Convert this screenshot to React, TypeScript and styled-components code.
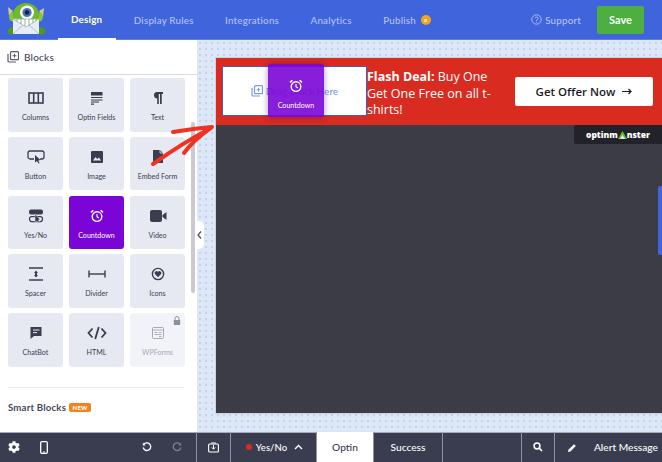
import React from 'react';
import styled, { createGlobalStyle } from 'styled-components';
import { FaCog } from 'react-icons/fa';

const Global = createGlobalStyle`
  html, body {
    margin: 0;
    padding: 0;
    background: #fff;
  }
  * {
    box-sizing: border-box;
  }
`;

const Page = styled.div`
  width: 662px;
  height: 462px;
  display: flex;
  flex-direction: column;
  overflow: hidden;
  position: relative;
  font-family: Lato, 'Liberation Sans', sans-serif;
  color: #3a3d50;
`;

const Header = styled.header`
  height: 40px;
  flex: none;
  display: flex;
  align-items: center;
  background: #4064dc;
  border-bottom: 1px solid #5f7ee4;
`;

const LogoBox = styled.div`
  width: 58px;
  flex: none;
  display: flex;
  padding-left: 7px;
`;

const Nav = styled.nav`
  display: flex;
  align-self: stretch;
  gap: 5px;
`;

const NavItem = styled.div<{ $active?: boolean }>`
  display: flex;
  align-items: center;
  gap: 5px;
  padding: 0 13.5px 0 13px;
  font-size: 9.8px;
  font-weight: ${(p) => (p.$active ? 700 : 500)};
  letter-spacing: 0.2px;
  color: ${(p) => (p.$active ? '#fff' : '#b4c3f3')};
  height: 40px;
  border-bottom: ${(p) => (p.$active ? '2px solid #fff' : '0')};
`;

const ProBadge = styled.span`
  width: 10px;
  height: 10px;
  border-radius: 50%;
  background: #f2a51e;
  display: flex;
  align-items: center;
  justify-content: center;
  &::after {
    content: '';
    width: 3px;
    height: 3px;
    background: #fbe3a8;
  }
`;

const HeaderRight = styled.div`
  margin-left: auto;
  display: flex;
  align-items: center;
`;

const Support = styled.div`
  display: flex;
  align-items: center;
  gap: 3px;
  font-size: 9.8px;
  font-weight: 500;
  letter-spacing: 0.2px;
  color: #b4c3f3;
  margin-right: 16px;
`;

const SaveButton = styled.button`
  width: 47px;
  height: 28px;
  border: 0;
  border-radius: 2px;
  background: #4caf3f;
  color: #fff;
  font: 700 11px Lato, sans-serif;
  padding: 0;
  margin-right: 18px;
`;

const Main = styled.div`
  flex: 1;
  min-height: 0;
  display: flex;
`;

const Sidebar = styled.aside`
  width: 197px;
  flex: none;
  background: #fff;
  display: flex;
  flex-direction: column;
  position: relative;
`;

const PanelTitle = styled.div`
  height: 35px;
  flex: none;
  display: flex;
  align-items: center;
  gap: 5px;
  padding-left: 7px;
  font-size: 10px;
  font-weight: 500;
  letter-spacing: 0.2px;
  color: #3f4254;
  border-bottom: 1px solid #d6dbea;
`;

const Grid = styled.div`
  display: grid;
  grid-template-columns: repeat(3, 55px);
  grid-auto-rows: 53.5px;
  column-gap: 6px;
  row-gap: 5.25px;
  padding: 3px 0 0 8px;
`;

const Tile = styled.div<{ $active?: boolean; $locked?: boolean }>`
  position: relative;
  border-radius: 3px;
  display: flex;
  flex-direction: column;
  align-items: center;
  padding-top: 10px;
  background: ${(p) => (p.$active ? '#7a05d6' : p.$locked ? '#f2f3f8' : '#e6e9f1')};
  color: ${(p) => (p.$active ? '#fff' : p.$locked ? '#a5a8b6' : '#3a3d50')};
`;

const TileIcon = styled.div`
  height: 20px;
  display: flex;
  align-items: center;
  justify-content: center;
`;

const TileLabel = styled.div`
  margin-top: 5px;
  font-size: 7.1px;
  line-height: 10px;
  white-space: nowrap;
`;

const Lock = styled.svg`
  position: absolute;
  top: 3px;
  right: 4px;
`;

const Scrollbar = styled.div`
  position: absolute;
  left: 191px;
  top: 82px;
  width: 4px;
  height: 171px;
  background: #c9cbd0;
  border-radius: 2px;
`;

const Divider = styled.div`
  height: 1px;
  margin: 20px 13px 0 8px;
  background: #e9ebf1;
`;

const SmartTitle = styled.div`
  display: flex;
  align-items: center;
  gap: 3px;
  margin: 14px 0 0 8px;
  font-size: 9.6px;
  font-weight: 700;
  letter-spacing: 0.2px;
  color: #45485a;
`;

const NewTag = styled.span`
  background: #f6821f;
  color: #fff;
  font-size: 6px;
  font-weight: 900;
  line-height: 9px;
  padding: 0 3.5px;
  border-radius: 2px;
`;

const Canvas = styled.main`
  flex: 1;
  min-width: 0;
  position: relative;
  padding: 18px 0 19px 19px;
  background-color: #dce8f7;
  background-image: radial-gradient(#c3d1e6 0.7px, transparent 0.8px);
  background-size: 6px 6px;
`;

const Campaign = styled.div`
  height: 100%;
  display: flex;
  flex-direction: column;
  background: #3c3c46;
  box-shadow: 0 0 0 1px #c9d2de;
`;

const Banner = styled.div`
  height: 67px;
  flex: none;
  display: flex;
  align-items: center;
  background: #d92b20;
  padding-left: 6px;
`;

const DropZone = styled.div`
  width: 145px;
  height: 50px;
  flex: none;
  margin-top: -2px;
  display: flex;
  align-items: center;
  justify-content: center;
  gap: 3px;
  background: #fff;
  border: 1px solid #3f5fc7;
  color: #7c98ea;
  font-size: 10px;
  font-weight: 500;
`;

const Headline = styled.div`
  width: 140px;
  flex: none;
  margin-top: 5px;
  font-family: 'Open Sans', sans-serif;
  font-size: 12.5px;
  line-height: 16.5px;
  color: #fff;
  b {
    font-weight: 700;
  }
`;

const OfferButton = styled.button`
  width: 138px;
  height: 29px;
  flex: none;
  margin-left: 8px;
  border: 0;
  border-radius: 2px;
  background: #fff;
  color: #1b1b1f;
  font: 600 11.5px 'Open Sans', sans-serif;
  display: flex;
  align-items: center;
  justify-content: center;
  gap: 7px;
  padding: 0;
`;

const DragTile = styled.div`
  position: absolute;
  left: 71px;
  top: 24px;
  width: 56px;
  height: 53px;
  border-radius: 2px;
  background: rgba(122, 5, 214, 0.9);
  box-shadow: 0 0 6px rgba(70, 0, 120, 0.45);
  color: #fff;
  display: flex;
  flex-direction: column;
  align-items: center;
  padding-top: 12px;
`;

const Branding = styled.div`
  position: absolute;
  right: 0;
  top: 85px;
  width: 88px;
  height: 19px;
  display: flex;
  align-items: center;
  justify-content: center;
  background: #22232a;
  border-radius: 2px 0 0 2px;
  color: #fff;
  font: 800 8.5px 'Open Sans', sans-serif;
`;

const SideTab = styled.div`
  position: absolute;
  right: 0;
  top: 146px;
  width: 4px;
  height: 69px;
  background: #4064dc;
  border-radius: 2px 0 0 2px;
`;

const Collapse = styled.div`
  position: absolute;
  left: 0;
  top: 181px;
  width: 7px;
  height: 28px;
  display: flex;
  align-items: center;
  background: #fff;
  border-radius: 0 5px 5px 0;
`;

const Arrow = styled.svg`
  position: absolute;
  left: 140px;
  top: 110px;
  pointer-events: none;
`;

const Footer = styled.footer`
  height: 30px;
  flex: none;
  display: flex;
  background: #3a3d50;
  box-shadow: inset 0 1px 0 #a9acb8;
  color: #fff;
  font-size: 10.2px;
  font-weight: 500;
`;

const FooterCell = styled.div<{ $width: number; $white?: boolean }>`
  width: ${(p) => p.$width}px;
  flex: none;
  display: flex;
  align-items: center;
  justify-content: center;
  gap: 4px;
  border-right: 1px solid #8f92a0;
  background: ${(p) => (p.$white ? '#fff' : 'transparent')};
  color: ${(p) => (p.$white ? '#3a3d50' : '#fff')};
`;

const FooterTools = styled(FooterCell)`
  justify-content: flex-start;
  padding-left: 8px;
  gap: 0;
`;

const ToolSlot = styled.div<{ $width: number }>`
  width: ${(p) => p.$width}px;
  display: flex;
  align-items: center;
`;

const StatusCell = styled(FooterCell)`
  font-size: 9.6px;
  padding-left: 2px;
`;

const AlertCell = styled.div`
  flex: 1;
  display: flex;
  align-items: center;
  justify-content: space-between;
  padding: 0 4px 0 13px;
  white-space: nowrap;
`;

const RedDot = styled.span`
  width: 6px;
  height: 6px;
  border-radius: 50%;
  background: #d92b20;
`;

const Monster = () => (
  <svg width="40" height="36" viewBox="0 0 40 36">
    <path d="M6 9 L1 5 L2 14Z M32 9 L37 6 L36 15Z" fill="#cfc98f" />
    <ellipse cx="6" cy="15" rx="4" ry="4.5" fill="#86c63a" />
    <ellipse cx="32" cy="15" rx="4" ry="4.5" fill="#86c63a" />
    <ellipse cx="19" cy="13" rx="13" ry="12" fill="#6dbb2a" />
    <ellipse cx="5" cy="29" rx="4.5" ry="3.5" fill="#4e9a1c" />
    <ellipse cx="34" cy="29" rx="4.5" ry="3.5" fill="#4e9a1c" />
    <circle cx="20" cy="10.5" r="7" fill="#fff" />
    <circle cx="20" cy="10.5" r="4.6" fill="#4b6fb5" />
    <circle cx="20" cy="10.5" r="2.2" fill="#12213f" />
    <path d="M6 17 H32 V32 H6Z" fill="#e6edf5" />
    <path d="M6 17 L19 25 L32 17Z" fill="#fff" stroke="#a5b3c4" strokeWidth="0.8" />
    <path d="M6 32 L16 23 M32 32 L22 23" stroke="#a5b3c4" strokeWidth="0.8" />
    <path d="M10 17 V19.5 M14 17 V22 M18 17 V24 M22 17 V23.5 M26 17 V21 M29 17 V19" stroke="#6f8f4a" strokeWidth="0.7" />
  </svg>
);

const Icon: React.FC<{ w?: number; h?: number; children: React.ReactNode }> = ({ w = 18, h = 18, children }) => (
  <svg width={w} height={h} viewBox={`0 0 ${w} ${h}`} fill="none">
    {children}
  </svg>
);

const AlarmIcon = () => (
  <Icon w={14} h={14}>
    <circle cx="7" cy="7.6" r="4.8" stroke="currentColor" strokeWidth="1.4" />
    <path d="M7 5 V7.8 L8.8 9" stroke="currentColor" strokeWidth="1.1" />
    <path d="M1 3.4 L3.4 1.2 M13 3.4 L10.6 1.2" stroke="currentColor" strokeWidth="1.5" />
  </Icon>
);

const AddBlocksIcon: React.FC<{ color: string }> = ({ color }) => (
  <Icon w={12} h={12}>
    <rect x="3.5" y="0.7" width="8" height="8" rx="1" stroke={color} strokeWidth="1.2" />
    <path d="M1 3 V10 a1 1 0 0 0 1 1 H9" stroke={color} strokeWidth="1.2" />
    <path d="M7.5 2.8 V6.6 M5.6 4.7 H9.4" stroke={color} strokeWidth="1" />
  </Icon>
);

const c = 'currentColor';

const tiles: { label: string; icon: React.ReactNode; active?: boolean; locked?: boolean }[] = [
  {
    label: 'Columns',
    icon: (
      <Icon w={16} h={12}>
        <rect x="1" y="1" width="14" height="10" stroke={c} strokeWidth="1.6" />
        <path d="M5.7 1 V11 M10.3 1 V11" stroke={c} strokeWidth="1.6" />
      </Icon>
    ),
  },
  {
    label: 'Optin Fields',
    icon: (
      <Icon w={13} h={14}>
        <path d="M1 1 H12.5 V4.5 H1Z" fill={c} />
        <path d="M1 6.5 H12.5 M1 9 H12.5 M1 11 H9 M1 13.2 H4" stroke={c} strokeWidth="1.2" />
      </Icon>
    ),
  },
  {
    label: 'Text',
    icon: (
      <Icon w={12} h={14}>
        <path d="M4.5 1 H11 V3 H9.7 V13 H8 V3 H6.8 V13 H5.2 V7.5 A3.3 3.3 0 0 1 4.5 1Z" fill={c} />
      </Icon>
    ),
  },
  {
    label: 'Button',
    icon: (
      <Icon w={18} h={14}>
        <path d="M7 9 H3 A2 2 0 0 1 1 7 V3 A2 2 0 0 1 3 1 H15 A2 2 0 0 1 17 3 V7 A2 2 0 0 1 15 9 H13" stroke={c} strokeWidth="1.3" />
        <path d="M8 5 L8 12.5 L10 11 L11.5 13.5 L12.5 13 L11.3 10.5 L13.5 10Z" fill={c} />
      </Icon>
    ),
  },
  {
    label: 'Image',
    icon: (
      <Icon w={14} h={14}>
        <rect x="1" y="1" width="12" height="12" rx="1" fill={c} />
        <path d="M3 10.5 L5.5 7 L7.2 9 L9 7.5 L11 10.5Z" fill="#e6e9f1" />
      </Icon>
    ),
  },
  {
    label: 'Embed Form',
    icon: (
      <Icon w={12} h={15}>
        <path d="M1 1 H8 L11 4 V14 H1Z" fill={c} />
        <path d="M8 1 V4 H11" stroke="#e6e9f1" strokeWidth="0.8" />
      </Icon>
    ),
  },
  {
    label: 'Yes/No',
    icon: (
      <Icon w={16} h={14}>
        <rect x="1" y="0.5" width="14" height="5" rx="2" fill={c} />
        <rect x="1.6" y="7.6" width="12.8" height="5" rx="2" stroke={c} strokeWidth="1.2" />
        <path d="M7 5 L7 13.5 L9 12 L10.5 13.5 L11.5 13 L10.5 11 L12 10.5Z" fill={c} stroke="#e6e9f1" strokeWidth="0.5" />
      </Icon>
    ),
  },
  { label: 'Countdown', icon: <AlarmIcon />, active: true },
  {
    label: 'Video',
    icon: (
      <Icon w={18} h={14}>
        <rect x="1" y="1" width="12" height="12" rx="2" fill={c} />
        <path d="M13.5 6 L17.5 3 V11 L13.5 8Z" fill={c} />
      </Icon>
    ),
  },
  {
    label: 'Spacer',
    icon: (
      <Icon w={16} h={14}>
        <path d="M1 1 H15 M1 13 H15" stroke={c} strokeWidth="1.4" />
        <path d="M8 3.5 L10 6 H9 V8 H10 L8 10.5 L6 8 H7 V6 H6Z" fill={c} />
      </Icon>
    ),
  },
  {
    label: 'Divider',
    icon: (
      <Icon w={18} h={8}>
        <path d="M1 0.5 V7.5 M17 0.5 V7.5" stroke={c} strokeWidth="1.4" />
        <path d="M1 4 H17" stroke={c} strokeWidth="1.4" />
      </Icon>
    ),
  },
  {
    label: 'Icons',
    icon: (
      <Icon w={14} h={14}>
        <circle cx="7" cy="7" r="5.6" stroke={c} strokeWidth="1.4" />
        <path d="M7 10.2 L3.9 7 A1.8 1.8 0 0 1 7 5 A1.8 1.8 0 0 1 10.1 7Z" fill={c} />
      </Icon>
    ),
  },
  {
    label: 'ChatBot',
    icon: (
      <Icon w={14} h={14}>
        <path d="M1.5 1 H12.5 V10 H5 L1.5 13Z" fill={c} />
        <path d="M4 4 H10.5 M4 6.6 H8" stroke="#e6e9f1" strokeWidth="1" />
      </Icon>
    ),
  },
  {
    label: 'HTML',
    icon: (
      <Icon w={20} h={14}>
        <path d="M5.5 2.5 L1.5 7 L5.5 11.5 M14.5 2.5 L18.5 7 L14.5 11.5 M11.8 1 L8.2 13" stroke={c} strokeWidth="1.8" />
      </Icon>
    ),
  },
  {
    label: 'WPForms',
    locked: true,
    icon: (
      <Icon w={14} h={14}>
        <rect x="1.5" y="1.5" width="11" height="11" rx="1" stroke={c} strokeWidth="1" />
        <path d="M1.5 4 H12.5 M3.5 6.5 H6.5 M8 6.5 H10.5 M3.5 8.5 H10.5 M8 10.5 H10.5" stroke={c} strokeWidth="0.9" />
      </Icon>
    ),
  },
];

const App: React.FC = () => (
  <Page>
    <Global />
    <Header>
      <LogoBox>
        <Monster />
      </LogoBox>
      <Nav>
        <NavItem $active>Design</NavItem>
        <NavItem>Display Rules</NavItem>
        <NavItem>Integrations</NavItem>
        <NavItem>Analytics</NavItem>
        <NavItem>
          Publish
          <ProBadge />
        </NavItem>
      </Nav>
      <HeaderRight>
        <Support>
          <svg width="11" height="11" viewBox="0 0 11 11" fill="none">
            <circle cx="5.5" cy="5.5" r="4.7" stroke="#b4c3f3" strokeWidth="0.9" />
            <path d="M4 4.2 A1.5 1.5 0 1 1 5.5 6 V6.8 M5.5 7.8 V8.7" stroke="#b4c3f3" strokeWidth="0.9" />
          </svg>
          Support
        </Support>
        <SaveButton>Save</SaveButton>
      </HeaderRight>
    </Header>
    <Main>
      <Sidebar>
        <PanelTitle>
          <AddBlocksIcon color="#5a5d6e" />
          Blocks
        </PanelTitle>
        <Grid>
          {tiles.map((t) => (
            <Tile key={t.label} $active={t.active} $locked={t.locked}>
              {t.locked && (
                <Lock width="8" height="9" viewBox="0 0 8 9">
                  <path d="M2 4 V2.5 A2 2 0 0 1 6 2.5 V4" fill="none" stroke="#8c8f9c" strokeWidth="1" />
                  <rect x="0.8" y="4" width="6.4" height="5" rx="0.6" fill="#8c8f9c" />
                </Lock>
              )}
              <TileIcon>{t.icon}</TileIcon>
              <TileLabel>{t.label}</TileLabel>
            </Tile>
          ))}
        </Grid>
        <Divider />
        <SmartTitle>
          Smart Blocks
          <NewTag>NEW</NewTag>
        </SmartTitle>
        <Scrollbar />
      </Sidebar>
      <Canvas>
        <Campaign>
          <Banner>
            <DropZone>
              <AddBlocksIcon color="#7c98ea" />
              Drag Block Here
            </DropZone>
            <Headline>
              <b>Flash Deal:</b> Buy One Get One Free on all t-shirts!
            </Headline>
            <OfferButton>
              Get Offer Now
              <svg width="10" height="7" viewBox="0 0 10 7" fill="none">
                <path d="M0 3.5 H9 M6.5 1 L9 3.5 L6.5 6" stroke="#1b1b1f" strokeWidth="1.2" />
              </svg>
            </OfferButton>
          </Banner>
        </Campaign>
        <DragTile>
          <TileIcon>
            <AlarmIcon />
          </TileIcon>
          <TileLabel>Countdown</TileLabel>
        </DragTile>
        <Branding>
          optinm
          <svg width="9" height="8" viewBox="0 0 9 8">
            <path d="M4.5 0 L9 8 H0Z" fill="#6dbb2a" />
            <path d="M2 8 L4.5 4 L7 8Z" fill="#e6edf5" />
          </svg>
          nster
        </Branding>
        <SideTab />
        <Collapse>
          <svg width="6" height="10" viewBox="0 0 6 10" fill="none">
            <path d="M4 1.5 L1 5 L4 8.5" stroke="#4a4d5e" strokeWidth="1.2" />
          </svg>
        </Collapse>
      </Canvas>
    </Main>
    <Footer>
      <FooterTools $width={197}>
        <ToolSlot $width={32}>
          <FaCog size={12} color="#fff" />
        </ToolSlot>
        <ToolSlot $width={102}>
          <svg width="8" height="13" viewBox="0 0 8 13" fill="none">
            <rect x="0.7" y="0.7" width="6.6" height="11.6" rx="1.2" stroke="#fff" strokeWidth="1.3" />
            <path d="M3 11 H5" stroke="#fff" />
          </svg>
        </ToolSlot>
        <ToolSlot $width={30}>
          <svg width="10" height="10" viewBox="0 0 10 10" fill="none">
            <path d="M2.2 2 A3.8 3.8 0 1 1 1.2 5.5" stroke="#fff" strokeWidth="1.3" />
            <path d="M0.8 0.5 V3.4 H3.7" fill="#fff" />
          </svg>
        </ToolSlot>
        <ToolSlot $width={14}>
          <svg width="10" height="10" viewBox="0 0 10 10" fill="none">
            <path d="M7.8 2 A3.8 3.8 0 1 0 8.8 5.5" stroke="#7c7f8e" strokeWidth="1.3" />
            <path d="M9.2 0.5 V3.4 H6.3" fill="#7c7f8e" />
          </svg>
        </ToolSlot>
      </FooterTools>
      <FooterCell $width={34}>
        <svg width="11" height="11" viewBox="0 0 11 11" fill="none">
          <rect x="0.6" y="2" width="9.8" height="8" rx="1" stroke="#fff" strokeWidth="1.1" />
          <path d="M3 1 H8 M5.5 3 V7 M3.8 5.4 L5.5 7.2 L7.2 5.4" stroke="#fff" />
        </svg>
      </FooterCell>
      <StatusCell $width={86}>
        <RedDot />
        Yes/No
        <svg width="9" height="6" viewBox="0 0 9 6" fill="none" style={{ marginLeft: 3 }}>
          <path d="M1 5 L4.5 1.5 L8 5" stroke="#fff" strokeWidth="1.4" />
        </svg>
      </StatusCell>
      <FooterCell $width={57} $white>
        Optin
      </FooterCell>
      <FooterCell $width={69}>Success</FooterCell>
      <FooterCell $width={79} />
      <FooterCell $width={33}>
        <svg width="10" height="10" viewBox="0 0 10 10" fill="none">
          <circle cx="4" cy="4" r="2.9" stroke="#fff" strokeWidth="1.5" />
          <path d="M6.2 6.2 L9 9" stroke="#fff" strokeWidth="1.7" />
        </svg>
      </FooterCell>
      <AlertCell>
        <svg width="9" height="9" viewBox="0 0 9 9">
          <path d="M0 9 L0.6 6.6 L6 1.2 L7.8 3 L2.4 8.4Z" fill="#fff" />
        </svg>
        Alert Message
      </AlertCell>
    </Footer>
    <Arrow width="90" height="60" viewBox="0 0 90 60" fill="none">
      <path
        d="M13 54 C30 42 52 28 71 18 M33 22 C46 20 60 18 72 17 C62 24 52 32 44 43"
        stroke="#ee3322"
        strokeWidth="4"
        strokeLinecap="round"
        strokeLinejoin="round"
      />
    </Arrow>
  </Page>
);

export default App;
